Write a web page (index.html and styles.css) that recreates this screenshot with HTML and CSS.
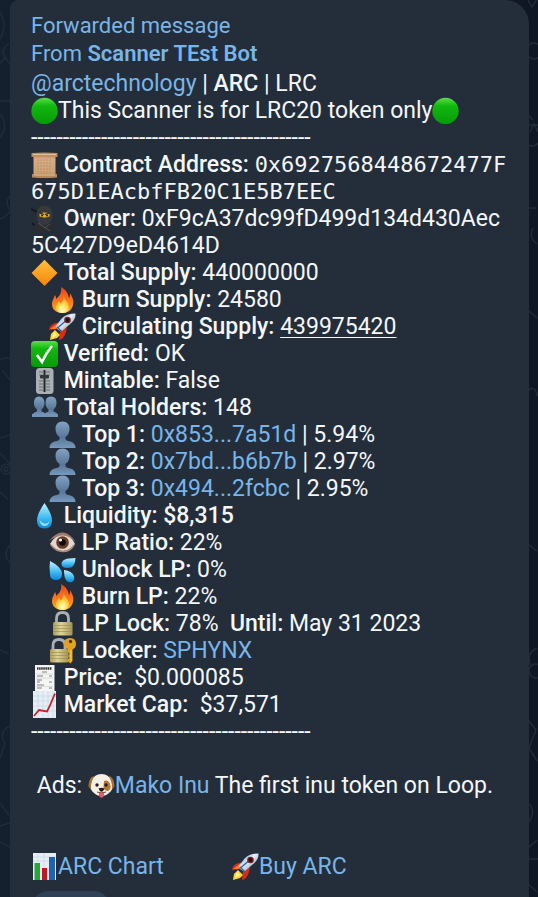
FILE: index.html
```html
<!DOCTYPE html>
<html lang="en">
<head>
    <meta charset="UTF-8">
    <meta name="viewport" content="width=device-width, initial-scale=1.0">
    <title>Scanner TEst Bot</title>
    <link rel="stylesheet" href="styles.css">
</head>
<body>
    <!-- Icon set, used below with <use> -->
    <svg class="icon-set" aria-hidden="true">
        <defs>
            <linearGradient id="g-green" x1="0" y1="0" x2="0" y2="1"><stop offset="0" stop-color="#5be04a"/><stop offset=".3" stop-color="#12b80f"/><stop offset="1" stop-color="#069a08"/></linearGradient>
            <linearGradient id="g-paper" x1="0" y1="0" x2="0" y2="1"><stop offset="0" stop-color="#b98a62"/><stop offset=".2" stop-color="#d6ae84"/><stop offset="1" stop-color="#c9a076"/></linearGradient>
            <linearGradient id="g-orange" x1="0" y1="0" x2="0" y2="1"><stop offset="0" stop-color="#ffbf45"/><stop offset="1" stop-color="#f98500"/></linearGradient>
            <linearGradient id="g-fire" x1="0" y1="0" x2="0" y2="1"><stop offset="0" stop-color="#e8451c"/><stop offset=".6" stop-color="#fb7d1e"/><stop offset="1" stop-color="#ffb12b"/></linearGradient>
            <radialGradient id="g-flame" cx=".5" cy=".85" r=".7"><stop offset="0" stop-color="#fffbd0"/><stop offset=".5" stop-color="#ffdf52"/><stop offset="1" stop-color="#ff9d22"/></radialGradient>
            <linearGradient id="g-rocket" x1="0" y1="0" x2="1" y2="1"><stop offset="0" stop-color="#3c7fc4"/><stop offset=".45" stop-color="#e6eff7"/><stop offset="1" stop-color="#6d8399"/></linearGradient>
            <linearGradient id="g-person" x1="0" y1="0" x2="0" y2="1"><stop offset="0" stop-color="#84a3c1"/><stop offset=".6" stop-color="#58779a"/><stop offset="1" stop-color="#7799bb"/></linearGradient>
            <linearGradient id="g-drop" x1="0" y1="0" x2="0" y2="1"><stop offset="0" stop-color="#c3f0ff"/><stop offset=".5" stop-color="#4fc4f5"/><stop offset="1" stop-color="#0a86dd"/></linearGradient>
            <linearGradient id="g-lock" x1="0" y1="0" x2="1" y2="0"><stop offset="0" stop-color="#a89c5a"/><stop offset=".4" stop-color="#dcd397"/><stop offset="1" stop-color="#a29552"/></linearGradient>
        </defs>
        <symbol id="circle" viewBox="0 0 27 27">
            <circle cx="13.5" cy="14" r="13.2" fill="url(#g-green)"/>
        </symbol>
        <symbol id="scroll" viewBox="0 0 27 27">
            <path d="M2.500 4h22v20h-22z" fill="url(#g-paper)"/>
            <path d="M.500 2q13-1 26 0v4q-13-1-26 0z" fill="#bb8e66"/>
            <path d="M1 23q12-1 25 0v3.500q-12 1-25 0z" fill="#b5875f"/>
            <path d="M2 3.500h23M3 24h21" stroke="#e3bf98"/>
            <path d="M6 9h15M6 12h15M6 15h15M6 18h15M6 21h14" stroke="#b48b62" stroke-width=".7" stroke-dasharray="2 1"/>
        </symbol>
        <symbol id="ninja" viewBox="0 0 27 27">
            <path d="M0 4l8 4M1 18l7 7" stroke="#17191c" stroke-width="2"/>
            <path d="M2 27q0-9 6-10h11q6 1 6 10z" fill="#2b2c2f"/>
            <path d="M13.500 1q8 0 8 9t-8 10q-8 0-8-10t8-9z" fill="#38393c"/>
            <path d="M8.500 8.500q5-2 10 0v3q-5 2-10 0z" fill="#e0ad2e"/>
            <path d="M8.500 8l4.500 1.500M18.500 8L14 9.500" stroke="#222" stroke-width="1.200"/>
            <circle cx="11" cy="10.500" r="1" fill="#221a10"/><circle cx="16" cy="10.500" r="1" fill="#221a10"/>
            <path d="M7 18l12 8M19 19l-5 4" stroke="#505256"/>
        </symbol>
        <symbol id="diamond" viewBox="0 0 27 27">
            <path d="M13.500.800L26.500 14 13.500 27 .500 14z" fill="url(#g-orange)"/>
        </symbol>
        <symbol id="fire" viewBox="0 0 27 27">
            <path d="M12 1c7 4 7 8 8 11 1-1 1-3 1-5 3 5 4 8 3 12-1 5-5 8-10.500 8S3 24 3 18c0-4 2-6 3-9 1 1 1 3 1 4 4-3 6-7 5-12z" fill="url(#g-fire)"/>
            <path d="M14 9c1 4 6 7 6 12 0 4-3 6-6.500 6S7 25 7 21c0-3 2-4 3-6 1 1 1 2 1 3 3-2 4-5 3-9z" fill="url(#g-flame)"/>
        </symbol>
        <symbol id="rocket" viewBox="0 0 27 27">
            <path d="M7 10l7-1-5 7-9 1q1-6 7-7z" fill="#d92c15"/>
            <path d="M18 13l-1 6q-2 7-7 8l1-9z" fill="#d92c15"/>
            <path d="M1 16l8-6 2 3-5 3z" fill="#ff7a2c"/>
            <path d="M6 17l5 5-3 3-7 2 1-6z" fill="#ffd532"/>
            <path d="M5 19l3 3-5 3z" fill="#fff3a3"/>
            <path d="M26.500.500q-9 0-14 5L7 13q1 5 6 5l7-6q7-5 6.500-11.500z" fill="url(#g-rocket)"/>
            <path d="M8 14l5 5M8.500 15l8-7" stroke="#2f66a8" stroke-width="1.500"/>
            <circle cx="18.500" cy="7" r="3.300" fill="#7c2028"/><circle cx="18.500" cy="7" r="1.900" fill="#1d1416"/>
        </symbol>
        <symbol id="check" viewBox="0 0 27 27">
            <rect x="0" y="1" width="27" height="26" rx="4" fill="url(#g-green)"/>
            <path d="M6 15l5 7q4-9 10-16" fill="none" stroke="#fff" stroke-width="2.600"/>
        </symbol>
        <symbol id="slider" viewBox="0 0 27 27">
            <rect x="5" y="1" width="17.500" height="26" rx="3.500" fill="#abb0b4"/>
            <path d="M8 5h4M8 8h4M8 14h4M8 17h4M8 20h4M8 23h4M15 5h4M15 8h4M15 14h4M15 17h4M15 20h4M15 23h4" stroke="#686e74"/>
            <path d="M13.500 3v22" stroke="#24272a" stroke-width="2"/>
            <rect x="9" y="8" width="9" height="3.500" rx="1" fill="#34383c"/>
        </symbol>
        <symbol id="people" viewBox="0 0 27 27">
            <path d="M12.500 22v-2q1-1 5-2.500v-2q-3-2-3-7 0-6 5.500-6t5.500 6q0 5-3 7v2q4 1.500 4.500 3.500v2z" fill="url(#g-person)"/>
            <path d="M1 22q0-3 5-4.500v-2q-3-2-3-7 0-6 5-6t5.500 6q0 5-3 7v2q5 1.500 5 4.500z" fill="url(#g-person)"/>
            <path d="M1 20h25.500v3H1z" fill="#7194b8"/>
        </symbol>
        <symbol id="person" viewBox="0 0 27 27">
            <path d="M.500 27q0-5 5-6.500 5-1 5-2.500v-2q-4-3-4-8 0-7.500 7-7.500t7 7.500q0 5-4 8v2q0 1.500 5 2.500 5 1.500 5 6.500z" fill="url(#g-person)"/>
        </symbol>
        <symbol id="drop" viewBox="0 0 27 27">
            <path d="M13.500 1q7.500 11 7.500 17.500 0 8-7.500 8T6 18.500Q6 12 13.500 1z" fill="url(#g-drop)"/>
            <path d="M8.500 18q1 6 5 6t5-5q-2 3-5 2.500T8.500 18z" fill="#8be3ff"/>
        </symbol>
        <symbol id="eye" viewBox="0 0 27 27">
            <path d="M1 15Q7 5 14 5t12 10q-5 7-12 7T1 15z" fill="#e2d6cf"/>
            <path d="M0 12Q7 3 14 3.500T26.500 13Q20 6.500 14 6.500T0 12z" fill="#a1796a"/>
            <path d="M2 16q5 6.500 12 6.500T25 16" fill="none" stroke="#ad8c7d" stroke-width="1.500"/>
            <circle cx="13.500" cy="13.500" r="6.300" fill="#673d29"/><circle cx="13.500" cy="13.500" r="3.300" fill="#100c0b"/><circle cx="11.500" cy="11" r="1.500" fill="#fff"/>
        </symbol>
        <symbol id="sweat" viewBox="0 0 27 27">
            <path d="M26.500 2q0 10-8 10-6 0-6-4 0-6 14-6z" fill="url(#g-drop)"/>
            <path d="M1 5q12 6 12 13 0 6-6 6t-6-6q-1-7 0-13z" fill="url(#g-drop)"/>
            <path d="M15 14q8 1 10 6 1 4-2 6-4 1-6-2t-2-10z" fill="url(#g-drop)"/>
        </symbol>
        <symbol id="lock" viewBox="0 0 27 27">
            <path d="M7.500 13V8.500q0-6 6-6t6 6V13" fill="none" stroke="#a8b0b5" stroke-width="2.800"/>
            <rect x="4" y="12" width="19.500" height="13.500" rx="1.500" fill="url(#g-lock)"/>
            <path d="M4 15.500h19.500M4 18.500h19.500M4 21.500h19.500" stroke="#948948" stroke-width=".6"/>
        </symbol>
        <symbol id="lock-key" viewBox="0 0 27 27">
            <path d="M4 13V8.500q0-6 6-6t6 6V13" fill="none" stroke="#a8b0b5" stroke-width="2.800"/>
            <rect x="1" y="12" width="18.500" height="13.500" rx="1.500" fill="url(#g-lock)"/>
            <path d="M1 15.500h18M1 18.500h18M1 21.500h18" stroke="#948948" stroke-width=".6"/>
            <path d="M21 1q6 0 6 6 0 4-3.500 5.500V24l-2 2.500-2.500-2v-2l1.500-1.500L19 19l1.500-2-1.500-2v-3q-4-1-4-5 0-6 6-6z" fill="#e2a123"/>
            <path d="M22 13v11" stroke="#f9d164"/><circle cx="21.500" cy="4.500" r="1.700" fill="#4a3613"/>
        </symbol>
        <symbol id="receipt" viewBox="0 0 27 27">
            <path d="M4 1h19.500v26H4z" fill="#f5f5f5"/>
            <path d="M6 4.500h15" stroke="#333" stroke-width="2.500" stroke-dasharray="1.500 .600"/>
            <path d="M11 8h5M6 12h6M6 16h5M6 18h3M6 21h7M6 24h5M18 12h3M18 18h3M18 24h3" stroke="#777" stroke-width=".9"/>
            <path d="M5 10h17M5 14h17M5 22.500h17" stroke="#c9c9c9" stroke-width=".6"/>
        </symbol>
        <symbol id="trend" viewBox="0 0 27 27">
            <path d="M2 0h23v27H2z" fill="#e4eef4"/>
            <path d="M2 5h23M2 10h23M2 15h23M2 20h23M7 0v27M12 0v27M17 0v27M22 0v27" stroke="#bfd4e1" stroke-width=".6"/>
            <path d="M3 25l5-6 8 1.500 3-6 2-5 3-7" fill="none" stroke="#c7212c" stroke-width="1.800"/>
        </symbol>
        <symbol id="dog" viewBox="0 0 27 27">
            <path d="M6 4Q1 5 .500 14q2 5 4 3zM21 4q5 1 5.500 10-2 5-4 3z" fill="#a9702f"/>
            <path d="M13.500 2Q21 2 23 9q3 9-2 12-3 3-7.500 3T6 21q-5-3-2-12 2-7 9.500-7z" fill="#f6efe4"/>
            <path d="M16 9q4-2 6 3t-2 7q-4 0-4.500-4z" fill="#b57731"/>
            <circle cx="9" cy="13" r="1.700" fill="#29201d"/><circle cx="18" cy="13" r="1.700" fill="#29201d"/>
            <path d="M11 20h5v4q-2.500 3.500-5 0z" fill="#ef5468"/>
            <path d="M10.500 16.500q3-1.500 6 0-1 3-3 3t-3-3z" fill="#221b1b"/>
            <path d="M9 20q3 1.500 4.500-.500 1.500 2 4.500.500" fill="none" stroke="#6b4d3c"/>
        </symbol>
        <symbol id="bars" viewBox="0 0 27 27">
            <path d="M2 0h23v27H2z" fill="#e4eef4"/>
            <path d="M2 4h23M2 8h23M7 0v27M13 0v27" stroke="#c0d5e0" stroke-width=".6"/>
            <path d="M3.500 10h5.500v17H3.500z" fill="#27a637"/><path d="M11 15h5v12h-5z" fill="#bd1a25"/><path d="M18 4h6v23h-6z" fill="#1f62b5"/>
        </symbol>
    </svg>

    <main class="chat">
        <svg class="doodles doodles-left" aria-hidden="true">
            <path d="M0 12q8 14 0 27M9 43q-9 7-4 14l5 7M-2 65l8-8M0 101h10M0 114q9 11 0 24M0 219q5-1 10-8M10 196q-6 6 0 14M0 360q8-4 10-1M2 370l8 10M0 438l10-3M0 453l10 11M0 492l8 7M10 545q-8 9 0 18M0 650l9 4M10 726q-12 6-5 18l-5 14M0 803l9 12M0 826l10-3M0 842l10 5"/>
            <circle cx="6" cy="469" r="5"/><circle cx="6" cy="469" r="2"/>
        </svg>
        <svg class="doodles doodles-right" aria-hidden="true">
            <path d="M0 0l4 7 6-9M0 115l5 5M0 125h10M2 132l4-8 4 8M0 145q6 3 10-2M0 208h8M5 228q-5 9 4 16M0 310l9 8M0 390q8-5 9 6M1 545l8 6M9 648q-12 6-6 18M0 720l8 10-7 18 8 13M0 803q9 8 0 20M9 840l-9 8M0 859h10M0 884l9 8"/>
            <circle cx="6" cy="51" r="8"/><circle cx="8" cy="671" r="7"/>
        </svg>

        <article class="message">
            <header class="forwarded">
                <div>Forwarded message</div>
                <div>From <b>Scanner TEst Bot</b></div>
            </header>

            <div class="row"><a href="#">@arctechnology</a> | <b>ARC</b> | LRC</div>
            <div class="row"><svg class="icon"><use href="#circle"/></svg>This Scanner is for LRC20 token only<svg class="icon"><use href="#circle"/></svg></div>
            <div class="row">--------------------------------------------</div>
            <div class="row"><svg class="icon"><use href="#scroll"/></svg> <b>Contract Address:</b> <code>0x6927568448672477F</code><wbr><code>675D1EAcbfFB20C1E5B7EEC</code></div>
            <div class="row"><svg class="icon"><use href="#ninja"/></svg> <b>Owner:</b> <span>0xF9cA37dc99fD499d134d430Aec</span><wbr><span>5C427D9eD4614D</span></div>
            <div class="row"><svg class="icon"><use href="#diamond"/></svg> <b>Total Supply:</b> 440000000</div>
            <div class="row sub"><svg class="icon"><use href="#fire"/></svg> <b>Burn Supply:</b> 24580</div>
            <div class="row sub"><svg class="icon"><use href="#rocket"/></svg> <b>Circulating Supply:</b> <u>439975420</u></div>
            <div class="row"><svg class="icon"><use href="#check"/></svg> <b>Verified:</b> OK</div>
            <div class="row"><svg class="icon"><use href="#slider"/></svg> <b>Mintable:</b> False</div>
            <div class="row"><svg class="icon"><use href="#people"/></svg> <b>Total Holders:</b> 148</div>
            <div class="row sub"><svg class="icon"><use href="#person"/></svg> <b>Top 1:</b> <a href="#">0x853...7a51d</a> | 5.94%</div>
            <div class="row sub"><svg class="icon"><use href="#person"/></svg> <b>Top 2:</b> <a href="#">0x7bd...b6b7b</a> | 2.97%</div>
            <div class="row sub"><svg class="icon"><use href="#person"/></svg> <b>Top 3:</b> <a href="#">0x494...2fcbc</a> | 2.95%</div>
            <div class="row"><svg class="icon"><use href="#drop"/></svg> <b>Liquidity: $8,315</b></div>
            <div class="row sub"><svg class="icon"><use href="#eye"/></svg> <b>LP Ratio:</b> 22%</div>
            <div class="row sub"><svg class="icon"><use href="#sweat"/></svg> <b>Unlock LP:</b> 0%</div>
            <div class="row sub"><svg class="icon"><use href="#fire"/></svg> <b>Burn LP:</b> 22%</div>
            <div class="row sub"><svg class="icon"><use href="#lock"/></svg> <b>LP Lock:</b> 78%&nbsp; <b>Until:</b> May 31 2023</div>
            <div class="row sub"><svg class="icon"><use href="#lock-key"/></svg> <b>Locker:</b> <a href="#">SPHYNX</a></div>
            <div class="row"><svg class="icon"><use href="#receipt"/></svg> <b>Price:</b>&nbsp; $0.000085</div>
            <div class="row"><svg class="icon"><use href="#trend"/></svg> <b>Market Cap:</b>&nbsp; $37,571</div>
            <div class="row">--------------------------------------------</div>

            <div class="row ads">&nbsp;Ads: <svg class="icon"><use href="#dog"/></svg><a href="#">Mako Inu</a> The first inu token on Loop.</div>

            <div class="row links">
                <a href="#"><svg class="icon"><use href="#bars"/></svg>ARC Chart</a>
                <a href="#"><svg class="icon"><use href="#rocket"/></svg>Buy ARC</a>
            </div>

            <button class="reaction" type="button" aria-label="Reactions"></button>
        </article>
    </main>
</body>
</html>
```
FILE: styles.css
```css
body {
    margin: 0;
    background: #111b28;
    font-family: Roboto, sans-serif;
    font-size: 23px;
    line-height: 27px;
    color: #f4f7fa;
}

.icon-set {
    position: absolute;
    width: 0;
    height: 0;
}

.chat {
    position: relative;
    box-sizing: border-box;
    height: 100vh;
    padding: 0 9px 0 10px;
    overflow: hidden;
    background: linear-gradient(90deg, #14202e, #0f1724);
}

/* Wallpaper lines on both sides of the bubble */
.doodles {
    position: absolute;
    top: 0;
    width: 10px;
    height: 100%;
    fill: none;
    stroke: #202c3a;
    stroke-width: 1.5;
}

.doodles-left {
    left: 0;
}

.doodles-right {
    right: 0;
}

.message {
    position: relative;
    min-height: 100vh;
    padding: 12px 21px;
    border-radius: 8px 24px 0 0;
    background: #232e3a;
}

.forwarded {
    margin-bottom: 2px;
    font-size: 22px;
    line-height: 28px;
    color: #78b5e9;
}

b {
    font-weight: 500;
}

.forwarded b {
    font-weight: 600;
}

a {
    color: #78b5e9;
    text-decoration: none;
}

code {
    font-family: "DejaVu Sans Mono", monospace;
    font-size: 22px;
    line-height: 20px;
}

u {
    text-decoration-thickness: 1px;
    text-underline-offset: 3px;
}

.row {
    word-break: break-all;
}

.sub {
    padding-left: 18px;
}

.icon {
    width: 27px;
    height: 27px;
    vertical-align: top;
}

.ads {
    margin-top: 27px;
    word-break: normal;
}

.links {
    display: flex;
    gap: 68px;
    margin-top: 54px;
}

.reaction {
    display: block;
    width: 80px;
    height: 36px;
    margin-top: 11px;
    padding: 0;
    border: none;
    border-radius: 18px;
    background: #2f4155;
}
```
